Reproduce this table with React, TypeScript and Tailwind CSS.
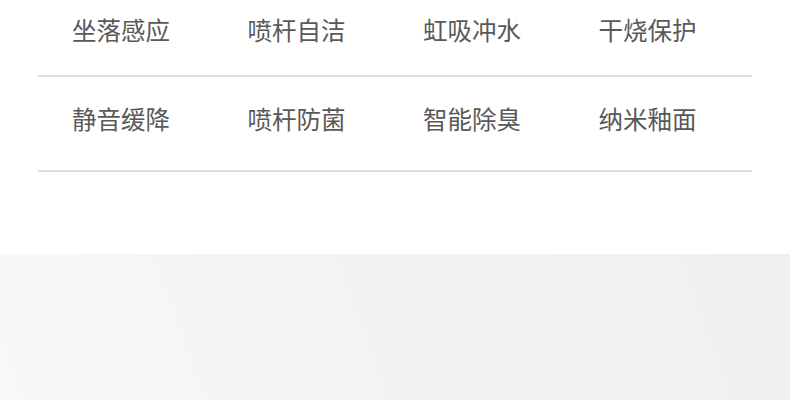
const rows = [
  ["坐落感应", "喷杆自洁", "虹吸冲水", "干烧保护"],
  ["静音缓降", "喷杆防菌", "智能除臭", "纳米釉面"],
];

export default function App() {
  return (
    <div className="h-[400px] w-[790px] overflow-hidden bg-white font-['Noto_Sans_CJK_SC',sans-serif]">
      <div className="mx-[38px] h-[254px]">
        {rows.map((row, i) => (
          <div
            key={i}
            className={`flex border-b-2 border-[#dedede] pl-[34px] ${
              i === 0 ? "h-[77px] pt-[12px]" : "h-[95px] pt-[24px]"
            }`}
          >
            {row.map((label) => (
              <div
                key={label}
                className="w-[175.5px] shrink-0 text-[24.5px] leading-[36px] text-[#595959]"
              >
                {label}
              </div>
            ))}
          </div>
        ))}
      </div>
      <div className="h-[146px] bg-[linear-gradient(70deg,#f7f8fa_0%,#f1f2f4_55%,#eff0f2_100%)]" />
    </div>
  );
}
